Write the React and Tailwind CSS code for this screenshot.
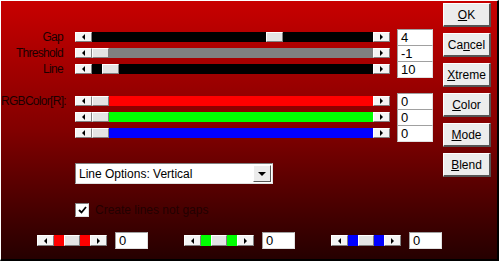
const font = { fontFamily: '"Liberation Sans", Arial, sans-serif' };

const Arrow = ({ dir }) => (
  <div className="w-[17px] h-full shrink-0 bg-[#f4f4f4] border-t border-l border-white border-b border-r border-b-[#808080] border-r-[#808080] flex items-center justify-center">
    {dir === 'left' ? (
      <div className="w-0 h-0 border-y-[3px] border-y-transparent border-r-[3px] border-r-black" />
    ) : (
      <div className="w-0 h-0 border-y-[3px] border-y-transparent border-l-[3px] border-l-black" />
    )}
  </div>
);

const Thumb = ({ w = 'w-[17px]' }) => (
  <div className={`${w} h-full shrink-0 bg-[#e4e4e4] border-t border-l border-white border-b border-r border-b-[#808080] border-r-[#808080]`} />
);

const Slider = ({ track, pos }) => (
  <div className="flex h-[10px] w-[315px]">
    <Arrow dir="left" />
    <div className={`flex flex-1 ${track}`}>
      <div style={{ width: pos }} className="shrink-0" />
      <Thumb />
    </div>
    <Arrow dir="right" />
  </div>
);

const ValueBox = ({ value, className = '' }) => (
  <div className={`w-[36px] h-[17px] bg-white border-t border-l border-[#a0a0a0] border-b border-r border-b-[#e0e0e0] border-r-[#e0e0e0] pl-[3px] text-[13px] leading-[15px] text-black ${className}`}>
    {value}
  </div>
);

const Row = ({ label, track, pos, value }) => (
  <div className="flex items-center h-[16px]">
    <div className="w-[62px] text-right text-[12px] tracking-[-0.7px] text-[#1a0000] leading-none whitespace-nowrap">{label}</div>
    <div className="ml-[12px]">
      <Slider track={track} pos={pos} />
    </div>
    <ValueBox value={value} className="ml-[7px]" />
  </div>
);

const MiniSlider = ({ color }) => (
  <div className="flex h-[11px] w-[70px]">
    <Arrow dir="left" />
    <div className={`w-[10px] shrink-0 ${color}`} />
    <Thumb w="w-[16px]" />
    <div className={`w-[10px] shrink-0 ${color}`} />
    <Arrow dir="right" />
  </div>
);

const Btn = ({ pre = '', u, post = '' }) => (
  <div className="w-[48px] h-[24px] bg-[#ececec] border-t border-l border-white border-b-2 border-r-2 border-b-[#555] border-r-[#555] flex items-center justify-center text-[12px] text-black">
    {pre}
    <span className="underline">{u}</span>
    {post}
  </div>
);

export default function App() {
  return (
    <div
      style={font}
      className="w-[499px] h-[261px] border-t border-l border-white border-b-2 border-r-2 border-b-black border-r-black bg-linear-to-b from-[#c80000] via-[#820000] to-[#260000] flex overflow-hidden"
    >
      <div className="w-[441px] shrink-0 pt-[28px] flex flex-col">
        <Row label="Gap" track="bg-black" pos={174} value="4" />
        <Row label="Threshold" track="bg-[#808080]" pos={0} value="-1" />
        <Row label="Line" track="bg-black" pos={10} value="10" />

        <div className="mt-[16px] flex flex-col">
          <Row label="RGBColor[R]:" track="bg-[#ff0000]" pos={0} value="0" />
          <Row label="" track="bg-[#00ff00]" pos={0} value="0" />
          <Row label="" track="bg-[#0000ff]" pos={0} value="0" />
        </div>

        <div className="mt-[22px] ml-[74px] w-[198px] h-[21px] bg-white border-t border-l border-[#808080] border-b border-r border-b-[#e0e0e0] border-r-[#e0e0e0] flex items-center">
          <div className="flex-1 pl-[3px] text-[12px] text-black">Line Options: Vertical</div>
          <div className="w-[18px] h-[17px] mr-px bg-[#ececec] border-t border-l border-white border-b border-r border-b-[#555] border-r-[#555] flex items-center justify-center">
            <div className="w-0 h-0 border-x-[4px] border-x-transparent border-t-[4px] border-t-black" />
          </div>
        </div>

        <div className="mt-[17px] ml-[74px] flex items-center gap-[6px]">
          <div className="w-[14px] h-[14px] shrink-0 bg-white border-t border-l border-[#808080] border-b border-r border-b-[#e0e0e0] border-r-[#e0e0e0] flex items-center justify-center">
            <svg width="9" height="8" viewBox="0 0 9 8">
              <path d="M1 4 L3.5 6.5 L8 1" fill="none" stroke="black" strokeWidth="1.8" />
            </svg>
          </div>
          <div className="text-[12px] text-[#220000]">Create lines not gaps</div>
        </div>

        <div className="mt-[13px] ml-[36px] flex items-center">
          <MiniSlider color="bg-[#ff0000]" />
          <ValueBox value="0" className="ml-[8px] h-[16px]" />
          <div className="ml-[36px]"><MiniSlider color="bg-[#00ff00]" /></div>
          <ValueBox value="0" className="ml-[8px] h-[16px]" />
          <div className="ml-[36px]"><MiniSlider color="bg-[#0000ff]" /></div>
          <ValueBox value="0" className="ml-[8px] h-[16px]" />
        </div>
      </div>

      <div className="w-[48px] shrink-0 ml-px pt-[2px] flex flex-col gap-[6px]">
        <Btn u="O" post="K" />
        <Btn pre="Ca" u="n" post="cel" />
        <Btn u="X" post="treme" />
        <Btn u="C" post="olor" />
        <Btn u="M" post="ode" />
        <Btn u="B" post="lend" />
      </div>
    </div>
  );
}
